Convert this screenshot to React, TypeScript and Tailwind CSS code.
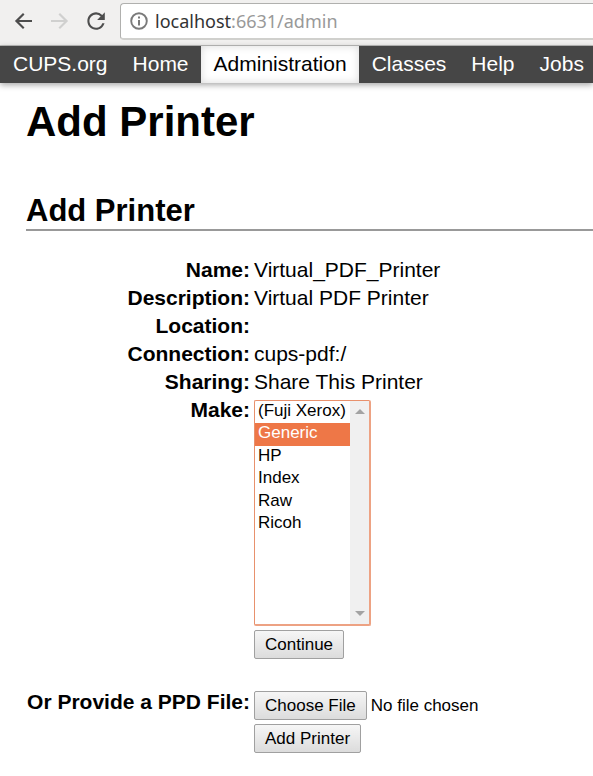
import { ReactNode } from "react";

const tabs = ["CUPS.org", "Home", "Administration", "Classes", "Help", "Jobs"];

const details = [
  ["Name:", "Virtual_PDF_Printer"],
  ["Description:", "Virtual PDF Printer"],
  ["Location:", ""],
  ["Connection:", "cups-pdf:/"],
  ["Sharing:", "Share This Printer"],
];

const makes = ["(Fuji Xerox)", "Generic", "HP", "Index", "Raw", "Ricoh"];

function ToolButton({ label, disabled, children }: { label: string; disabled?: boolean; children: ReactNode }) {
  return (
    <button type="button" aria-label={label} disabled={disabled} className="shrink-0 text-[#4d4d4d] disabled:text-[#d0d0cf]">
      <svg width="24" height="24" viewBox="0 0 24 24" fill="currentColor" aria-hidden="true">
        {children}
      </svg>
    </button>
  );
}

function BrowserBar() {
  return (
    <div className="flex h-[46px] items-start overflow-hidden border-b border-[#bdbdbb] bg-[#f1f0ef] pt-[3px]">
      <div className="flex h-9 shrink-0 items-center gap-3 pl-3">
        <ToolButton label="Back">
          <path d="M20 10.9H7l5.5-5.5L11 3.9 2.9 12l8.1 8.1 1.5-1.5L7 13.1h13z" />
        </ToolButton>
        <ToolButton label="Forward" disabled>
          <path d="M3 10.9h13l-5.5-5.5L12 3.9l8.1 8.1-8.1 8.1-1.5-1.5 5.5-5.5H3z" />
        </ToolButton>
        <ToolButton label="Reload">
          <path
            transform="translate(-1 -1) scale(1.09)"
            d="M17.65 6.35A7.96 7.96 0 0 0 12 4c-4.42 0-8 3.58-8 8s3.58 8 8 8c3.73 0 6.84-2.55 7.73-6h-2.08A5.99 5.99 0 0 1 12 18.1c-3.37 0-6.1-2.73-6.1-6.1S8.63 5.9 12 5.9c1.66 0 3.14.69 4.22 1.78L13 11h7V4z"
          />
        </ToolButton>
      </div>
      <div className="ml-3 flex h-[37px] min-w-0 grow items-center rounded-l-[4px] border border-r-0 border-b-2 border-[#b0b0ae] border-b-[#d0d0cd] bg-white pl-2">
        <svg width="20" height="20" viewBox="0 0 20 20" className="shrink-0" aria-hidden="true">
          <circle cx="10" cy="10" r="7.8" fill="none" stroke="#7a7a7a" strokeWidth="1.9" />
          <path d="M9 5.5h2v2H9zM9 9h2v5.5H9z" fill="#7a7a7a" />
        </svg>
        <div className="ml-1.5 whitespace-nowrap font-['Noto_Sans',sans-serif] text-[18px] leading-6 text-[#333]">
          localhost<span className="text-[#999]">:6631/admin</span>
        </div>
      </div>
    </div>
  );
}

const buttonStyle =
  "h-[29px] rounded-[2px] border border-[#a0a0a0] bg-linear-to-b from-[#f6f6f6] to-[#dcdcdc] px-[10px] text-[17px] leading-5 text-black";

export default function App() {
  return (
    <div className="overflow-x-hidden bg-white font-['Liberation_Sans',Arial,sans-serif] text-[21px] leading-7 text-black">
      <BrowserBar />
      <nav className="flex h-[37px] bg-[#464646] shadow-[0_2px_6px_rgba(0,0,0,0.35)]">
        {tabs.map((tab) => (
          <a
            key={tab}
            href="#"
            aria-current={tab === "Administration" ? "page" : undefined}
            className="shrink-0 pt-1 pr-3 pl-[13px] text-white aria-[current=page]:bg-white aria-[current=page]:text-black aria-[current=page]:shadow-[inset_0_0_8px_rgba(0,0,0,0.15)]"
          >
            {tab}
          </a>
        ))}
      </nav>
      <main className="pl-[26px]">
        <h1 className="pt-[15px] text-[42px] leading-[48px] font-bold">Add Printer</h1>
        <h2 className="mt-[46px] border-b-2 border-[#999] pt-px text-[31px] leading-9 font-bold">Add Printer</h2>
        <form className="mt-[25px]" onSubmit={(e) => e.preventDefault()}>
          <table>
            <tbody>
              {details.map(([name, value]) => (
                <tr key={name} className="h-7">
                  <th scope="row" className="w-[228px] p-0 pr-1 text-right">{name}</th>
                  <td className="p-0">{value}</td>
                </tr>
              ))}
              <tr>
                <th scope="row" className="p-0 pr-1 text-right align-top">
                  <label htmlFor="make">Make:</label>
                </th>
                <td className="p-0 pt-1">
                  <div className="flex h-[226px] w-[117px] rounded-[2px] border border-r-2 border-b-2 border-[#e8916d] border-r-[#eda283] border-b-[#eda283] bg-white">
                    <select
                      id="make"
                      size={10}
                      defaultValue="Generic"
                      className="h-full min-w-0 grow overflow-hidden text-[17px] outline-none"
                    >
                      {makes.map((make) => (
                        <option
                          key={make}
                          className="h-[22px] min-h-0 p-0 pl-[3px] leading-[22px] even:h-[23px] checked:bg-[#ee7747] checked:text-white"
                        >
                          {make}
                        </option>
                      ))}
                    </select>
                    <div className="flex w-[19px] shrink-0 flex-col items-center justify-between bg-[#f0f0f0] py-2" aria-hidden="true">
                      <svg width="10" height="5" viewBox="0 0 10 5"><path d="M0 5 5 0l5 5z" fill="#a3a3a3" /></svg>
                      <svg width="10" height="5" viewBox="0 0 10 5"><path d="m0 0 5 5 5-5z" fill="#a3a3a3" /></svg>
                    </div>
                  </div>
                  <button type="submit" className={`${buttonStyle} mt-1 block`}>Continue</button>
                </td>
              </tr>
              <tr>
                <th scope="row" className="p-0 pt-[29px] pr-1 text-right align-top whitespace-nowrap">
                  <label htmlFor="ppd">Or Provide a PPD File:</label>
                </th>
                <td className="p-0 pt-8">
                  <input
                    id="ppd"
                    type="file"
                    className="block h-[29px] w-[260px] text-[17px] leading-5 file:mr-1 file:h-[29px] file:rounded-[2px] file:border file:border-solid file:border-[#a0a0a0] file:bg-linear-to-b file:from-[#f6f6f6] file:to-[#dcdcdc] file:px-[10px] file:text-[17px] file:leading-5 file:text-black"
                  />
                  <button type="submit" className={`${buttonStyle} mt-1 block`}>Add Printer</button>
                </td>
              </tr>
            </tbody>
          </table>
        </form>
      </main>
    </div>
  );
}
